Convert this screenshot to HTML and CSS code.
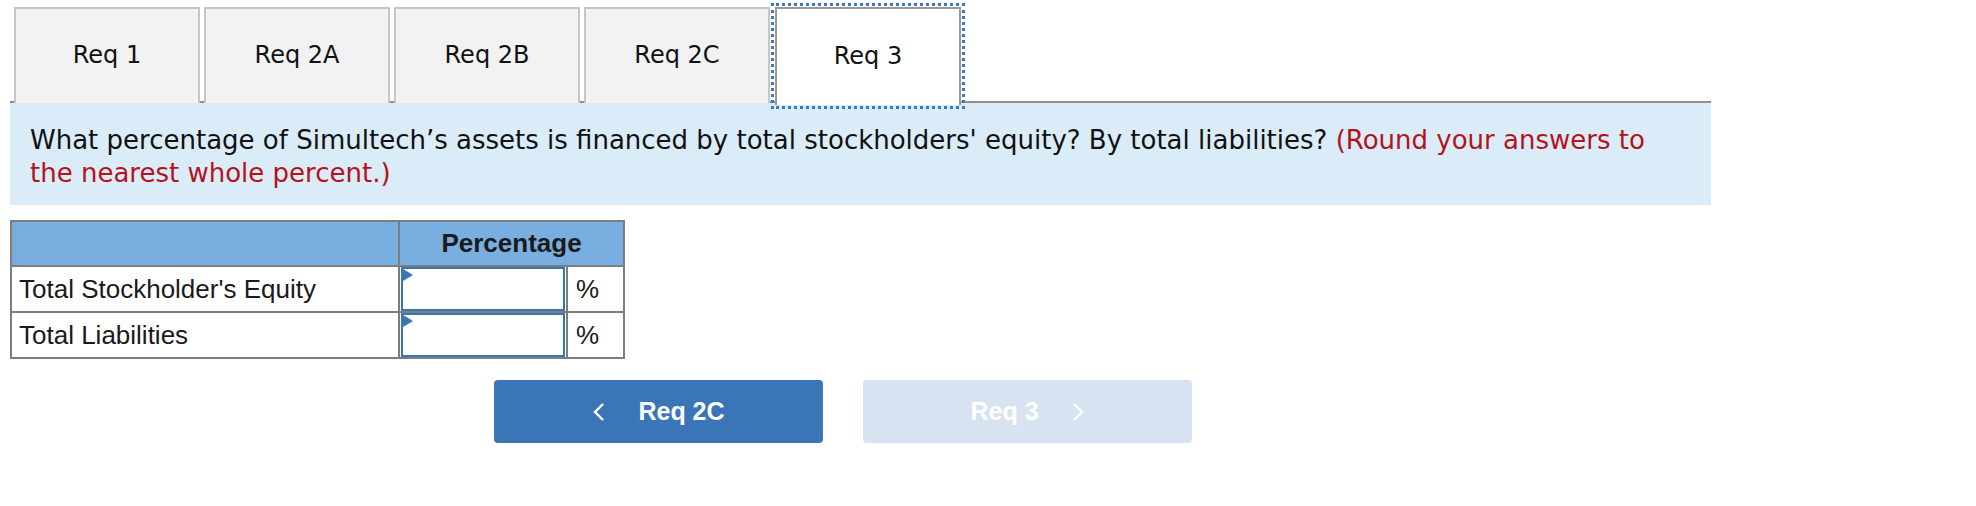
FILE: index.html
```
<!DOCTYPE html>
<html>
<head>
<meta charset="utf-8">
<link rel="stylesheet" href="styles.css">
</head>
<body>
<div class="page">
  <div class="tabs">
    <div class="tab">Req 1</div>
    <div class="tab">Req 2A</div>
    <div class="tab">Req 2B</div>
    <div class="tab">Req 2C</div>
    <div class="tab active">Req 3</div>
  </div>
  <div class="question">
    What percentage of Simultech’s assets is financed by total stockholders' equity? By total liabilities? <span class="note">(Round your answers to the nearest whole percent.)</span>
  </div>
  <table class="grid">
    <colgroup>
      <col class="c1">
      <col class="c2">
      <col class="c3">
    </colgroup>
    <tr class="head">
      <th></th>
      <th colspan="2">Percentage</th>
    </tr>
    <tr>
      <td class="label">Total Stockholder's Equity</td>
      <td class="inp"><div class="box"></div></td>
      <td class="pct">%</td>
    </tr>
    <tr>
      <td class="label">Total Liabilities</td>
      <td class="inp"><div class="box"></div></td>
      <td class="pct">%</td>
    </tr>
  </table>
  <div class="nav">
    <div class="btn prev">
      <svg class="chev" width="14" height="20" viewBox="0 0 14 20"><path d="M11 2 L3 10 L11 18" fill="none" stroke="#fff" stroke-width="2.4"/></svg>
      <span>Req 2C</span>
    </div>
    <div class="btn next">
      <span>Req 3</span>
      <svg class="chev" width="14" height="20" viewBox="0 0 14 20"><path d="M3 2 L11 10 L3 18" fill="none" stroke="#fff" stroke-width="2.4"/></svg>
    </div>
  </div>
</div>
</body>
</html>
```
FILE: styles.css
```
html, body {
  margin: 0;
  padding: 0;
  background: #fff;
}
.page {
  padding: 7px 0 0 10px;
  width: 1701px;
}
.tabs {
  display: flex;
  gap: 4px;
  padding-left: 4px;
  border-bottom: 2px solid #8f8f8f;
  height: 94px;
}
.tab {
  width: 182px;
  height: 92px;
  background: #f2f2f2;
  border: 2px solid #c6c6c6;
  border-bottom: none;
  display: flex;
  align-items: center;
  justify-content: center;
  font-family: "DejaVu Sans", Verdana, sans-serif;
  font-size: 24px;
  color: #111;
  padding-bottom: 2px;
}
.tab.active {
  background: #fff;
  border-color: #9a9a9a;
  margin-left: 1px;
  height: 94px;
  position: relative;
  outline: 3px dotted #3b78c2;
  outline-offset: 1px;
  z-index: 2;
}
.question {
  background: #dbecf9;
  padding: 21px 20px 15px 20px;
  font-family: "DejaVu Sans", Verdana, sans-serif;
  font-size: 26px;
  line-height: 33px;
  color: #111;
  height: 66px;
}
.note {
  color: #b5121b;
}
.grid {
  margin-top: 15px;
  border-collapse: collapse;
  table-layout: fixed;
  width: 613px;
  font-family: "Liberation Sans", Arial, sans-serif;
  font-size: 26px;
  color: #1a1a1a;
}
.c1 { width: 388px; }
.c2 { width: 168px; }
.c3 { width: 57px; }
.grid th, .grid td {
  border: 2px solid #7d7d7d;
  padding: 0;
}
.head th {
  background: #79aee1;
  height: 43px;
  font-weight: bold;
  text-align: center;
  color: #1a1a1a;
}
.grid td {
  height: 44px;
}
.label {
  padding-left: 7px !important;
  text-align: left;
}
.box {
  height: 40px;
  border: 2px solid #3a75b7;
  margin: 0 1px;
  position: relative;
  background: #fff;
}
.box::before {
  content: "";
  position: absolute;
  left: 0;
  top: 0;
  border-left: 10px solid #3a75b7;
  border-top: 6px solid transparent;
  border-bottom: 6px solid transparent;
}
.pct {
  padding-left: 8px !important;
}
.nav {
  display: flex;
  gap: 40px;
  margin-top: 21px;
  padding-left: 484px;
}
.btn {
  width: 329px;
  height: 63px;
  border-radius: 4px;
  display: flex;
  align-items: center;
  justify-content: center;
  gap: 32px;
  font-family: "Liberation Sans", Arial, sans-serif;
  font-weight: bold;
  font-size: 25px;
  color: #fff;
}
.prev {
  background: #3a75b7;
}
.next {
  background: #d7e3f1;
}
.chev {
  display: block;
}
```
